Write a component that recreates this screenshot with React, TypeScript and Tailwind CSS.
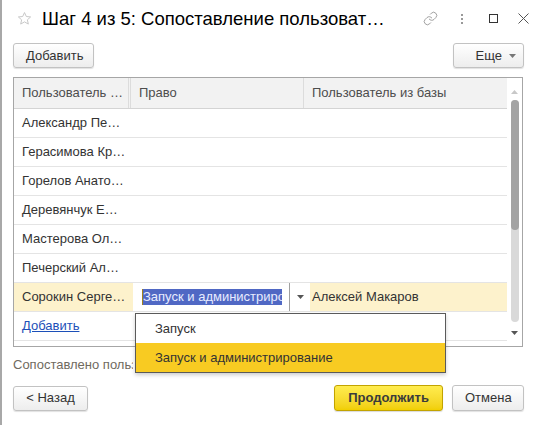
import { Link } from 'lucide-react';

const rows = [
  'Александр Пе…',
  'Герасимова Кр…',
  'Горелов Анато…',
  'Деревянчук Е…',
  'Мастерова Ол…',
  'Печерский Ал…',
];

function Tri({ up = false, color = '#666' }: { up?: boolean; color?: string }) {
  return (
    <svg width="7" height="4" viewBox="0 0 7 4" className="shrink-0">
      <path d={up ? 'M0 4L3.5 0L7 4z' : 'M0 0L7 0L3.5 4z'} fill={color} />
    </svg>
  );
}

function Button({ children, className = '' }: { children: React.ReactNode; className?: string }) {
  return (
    <button
      className={`h-[25px] px-[12px] rounded-[3px] border border-[#c2c2c2] bg-gradient-to-b from-white to-[#ededed] text-[13px] text-[#333] shadow-[0_1px_1px_rgba(0,0,0,0.12)] ${className}`}
    >
      {children}
    </button>
  );
}

export default function App() {
  return (
    <div
      className="relative w-[535px] h-[425px] overflow-hidden bg-white border-l-2 border-[#a8a8a8] text-[#333]"
      style={{ fontFamily: '"Liberation Sans", Arial, sans-serif' }}
    >
      {/* Title bar */}
      <div className="flex items-center h-[37px] pl-[15px] pr-[6px]">
        <svg width="15" height="15" viewBox="0 0 24 24" className="shrink-0">
          <path
            d="M12 2.5l2.9 6.3 6.9.7-5.2 4.6 1.5 6.8L12 17.4l-6.1 3.5 1.5-6.8-5.2-4.6 6.9-.7z"
            fill="none"
            stroke="#c4c4c4"
            strokeWidth="1.5"
            strokeLinejoin="round"
          />
        </svg>
        <div className="ml-[10px] text-[18.5px] text-black whitespace-nowrap">
          Шаг 4 из 5: Сопоставление пользоват…
        </div>
        <div className="ml-auto flex items-center">
          <Link size={15} strokeWidth={1.3} color="#8a8a8a" />
          <div className="ml-[23px] flex flex-col gap-[2px]">
            <span className="block w-[2px] h-[2px] bg-[#999]" />
            <span className="block w-[2px] h-[2px] bg-[#999]" />
            <span className="block w-[2px] h-[2px] bg-[#999]" />
          </div>
          <div className="ml-[26px] w-[9px] h-[9px] border border-[#333]" />
          <svg width="11" height="11" viewBox="0 0 11 11" className="ml-[20px]">
            <path d="M0.5 0.5l10 10M10.5 0.5l-10 10" stroke="#555" strokeWidth="1" />
          </svg>
        </div>
      </div>

      {/* Toolbar */}
      <div className="flex justify-between items-center mt-[6px] pl-[11px] pr-[11px]">
        <Button className="w-[81px]">Добавить</Button>
        <Button className="w-[71px] flex items-center justify-end gap-[7px] pr-[7px]">
          Еще
          <Tri color="#777" />
        </Button>
      </div>

      {/* Table */}
      <div className="mt-[9px] ml-[11px] w-[510px] h-[270px] border border-[#a6a6a6] flex">
        <div className="flex-1 flex flex-col">
          <div className="flex h-[31px] bg-[#f2f2f2] border-b border-[#d4d4d4] text-[13px] text-[#4d4d4d]">
            <div className="w-[117px] pl-[8px] flex items-center border-r-[3px] border-double border-[#dcdcdc]">
              Пользователь …
            </div>
            <div className="w-[173px] pl-[8px] flex items-center border-r border-[#dcdcdc]">Право</div>
            <div className="flex-1 pl-[8px] flex items-center">Пользователь из базы</div>
          </div>
          {rows.map((r) => (
            <div key={r} className="flex h-[29px] border-b border-[#e4e4e4] text-[13px] text-[#333]">
              <div className="w-[117px] pl-[8px] flex items-center">{r}</div>
            </div>
          ))}
          {/* Selected row */}
          <div className="flex h-[29px] border-b border-[#e4e4e4] text-[13px] text-[#333] bg-[#fdf2cc]">
            <div className="w-[119px] pl-[8px] flex items-center">Сорокин Серге…</div>
            <div className="w-[177px] bg-white flex items-center">
              <div className="flex-1 pl-[9px] overflow-hidden">
                <div className="w-[140px] h-[16px] leading-[16px] bg-[#5068c4] text-[#e8ecff] whitespace-nowrap overflow-hidden border-l border-[#a08020]">
                  Запуск и администриро
                </div>
              </div>
              <div className="w-[21px] h-full border-l border-[#a0a0a0] flex items-center justify-center">
                <Tri color="#555" />
              </div>
            </div>
            <div className="flex-1 pl-[2px] flex items-center">Алексей Макаров</div>
          </div>
          <div className="flex h-[29px] border-b border-[#e4e4e4] text-[13px]">
            <div className="pl-[8px] flex items-center">
              <a className="text-[#1c4fb8] underline cursor-pointer">Добавить</a>
            </div>
          </div>
        </div>

        {/* Scrollbar */}
        <div className="w-[15px] flex flex-col items-center">
          <div className="h-[22px] flex items-end justify-center pb-[6px]">
            <Tri up color="#c8c8c8" />
          </div>
          <div className="w-[8px] h-[222px] rounded-[4px] bg-[#d9d9d9] flex flex-col">
            <div className="h-[130px] rounded-[4px] bg-[#a3a3a3]" />
          </div>
          <div className="mt-[9px]">
            <Tri color="#555" />
          </div>
        </div>
      </div>

      {/* Status */}
      <div className="mt-[10px] ml-[11px] h-[16px] w-[120px] overflow-hidden text-[13px] text-[#6f6a60] leading-[16px] whitespace-nowrap">
        Сопоставлено пользователей: 1 из 7
      </div>

      {/* Bottom buttons */}
      <div className="mt-[12px] flex items-center pl-[11px] pr-[11px]">
        <Button className="w-[75px]">&lt; Назад</Button>
        <button className="ml-auto h-[26px] w-[109px] rounded-[3px] border border-[#c2a300] bg-gradient-to-b from-[#ffec4d] to-[#f1cf00] text-[13px] font-bold text-[#3b3b3b] shadow-[0_1px_1px_rgba(0,0,0,0.15)]">
          Продолжить
        </button>
        <Button className="ml-[9px] w-[72px] h-[26px]">Отмена</Button>
      </div>

      {/* Dropdown list */}
      <div className="absolute left-[133px] top-[313px] w-[311px] border border-[#5a5a5a] bg-white shadow-[0_2px_4px_rgba(0,0,0,0.2)] text-[13px] text-[#333]">
        <div className="h-[29px] pl-[19px] flex items-center">Запуск</div>
        <div className="h-[29px] pl-[19px] flex items-center bg-[#f8cb22]">Запуск и администрирование</div>
      </div>
    </div>
  );
}
